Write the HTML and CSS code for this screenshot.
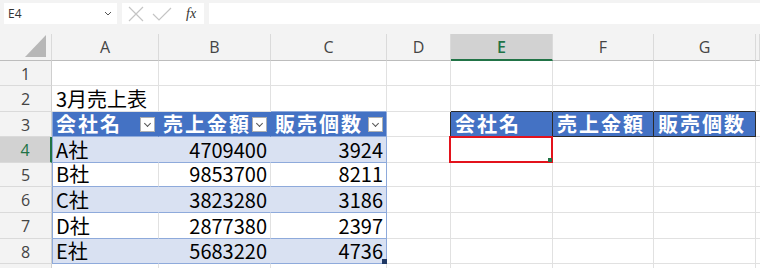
FILE: index.html
```html
<!DOCTYPE html>
<html lang="ja">
<head>
    <meta charset="UTF-8">
    <title>3月売上表</title>
    <link rel="stylesheet" href="styles.css">
</head>
<body>
    <div class="formula-bar">
        <div class="name-box">
            <span>E4</span>
            <svg width="8" height="5" viewBox="0 0 8 5"><polyline points="1,1 4,4 7,1" fill="none" stroke="#555" stroke-width="1"/></svg>
        </div>
        <div class="fx-buttons">
            <svg width="16" height="16" viewBox="0 0 16 16"><path d="M1 1L15 15M15 1L1 15" stroke="#c4c4c4" stroke-width="1.2" fill="none"/></svg>
            <svg width="20" height="16" viewBox="0 0 20 16"><polyline points="1,8 7,14 19,2" stroke="#c4c4c4" stroke-width="1.2" fill="none"/></svg>
            <span class="fx">fx</span>
        </div>
        <div class="formula-input"></div>
    </div>

    <div class="sheet">
        <!-- column headers -->
        <div class="ch corner"><svg width="22" height="23" viewBox="0 0 22 23"><polygon points="21,0 21,22 0,22" fill="#b7b7b7"/></svg></div>
        <div class="ch">A</div>
        <div class="ch">B</div>
        <div class="ch">C</div>
        <div class="ch">D</div>
        <div class="ch sel-col">E</div>
        <div class="ch">F</div>
        <div class="ch">G</div>
        <div class="ch"></div>

        <!-- row 1 -->
        <div class="rh">1</div>
        <div class="c"></div><div class="c"></div><div class="c"></div><div class="c"></div>
        <div class="c"></div><div class="c"></div><div class="c"></div><div class="c"></div>

        <!-- row 2 -->
        <div class="rh">2</div>
        <div class="c">3月売上表</div><div class="c"></div><div class="c t-top"></div><div class="c"></div>
        <div class="c k-top"></div><div class="c k-top"></div><div class="c k-top"></div><div class="c"></div>

        <!-- row 3 -->
        <div class="rh">3</div>
        <div class="c th t-left">会社名<span class="filter"></span></div>
        <div class="c th">売上金額<span class="filter"></span></div>
        <div class="c th t-right">販売個数<span class="filter"></span></div>
        <div class="c k-right"></div>
        <div class="c kh">会社名</div>
        <div class="c kh">売上金額</div>
        <div class="c kh">販売個数</div>
        <div class="c"></div>

        <!-- row 4 -->
        <div class="rh sel-row">4</div>
        <div class="c band t-left">A社</div>
        <div class="c band num">4709400</div>
        <div class="c band num t-right">3924</div>
        <div class="c"></div>
        <div class="c active"><span class="cursor"></span></div>
        <div class="c"></div><div class="c"></div><div class="c"></div>

        <!-- row 5 -->
        <div class="rh">5</div>
        <div class="c row t-left">B社</div>
        <div class="c row num">9853700</div>
        <div class="c row num t-right">8211</div>
        <div class="c"></div><div class="c"></div><div class="c"></div><div class="c"></div><div class="c"></div>

        <!-- row 6 -->
        <div class="rh">6</div>
        <div class="c band t-left">C社</div>
        <div class="c band num">3823280</div>
        <div class="c band num t-right">3186</div>
        <div class="c"></div><div class="c"></div><div class="c"></div><div class="c"></div><div class="c"></div>

        <!-- row 7 -->
        <div class="rh">7</div>
        <div class="c row t-left">D社</div>
        <div class="c row num">2877380</div>
        <div class="c row num t-right">2397</div>
        <div class="c"></div><div class="c"></div><div class="c"></div><div class="c"></div><div class="c"></div>

        <!-- row 8 -->
        <div class="rh">8</div>
        <div class="c band t-left">E社</div>
        <div class="c band num">5683220</div>
        <div class="c band num t-right t-end">4736<span class="resize"></span></div>
        <div class="c"></div><div class="c"></div><div class="c"></div><div class="c"></div><div class="c"></div>

        <!-- row 9 -->
        <div class="rh"></div>
        <div class="c"></div><div class="c"></div><div class="c"></div><div class="c"></div>
        <div class="c"></div><div class="c"></div><div class="c"></div><div class="c"></div>
    </div>
</body>
</html>
```

FILE: styles.css
```css
* {
    margin: 0;
    padding: 0;
    box-sizing: border-box;
}

body {
    width: 760px;
    height: 268px;
    overflow: hidden;
    background: #fff;
    font-family: "Noto Sans CJK JP", sans-serif;
}

/* formula bar */
.formula-bar {
    display: flex;
    gap: 5px;
    height: 34px;
    padding: 3px 0 0 4px;
    background: #f3f3f3;
}

.name-box,
.fx-buttons,
.formula-input {
    height: 21px;
    background: #fff;
}

.name-box {
    width: 113px;
    display: flex;
    align-items: center;
    justify-content: space-between;
    padding: 0 5px 0 4px;
    font-family: "Open Sans", sans-serif;
    font-size: 12px;
    color: #333;
}

.fx-buttons {
    width: 82px;
    display: flex;
    align-items: center;
    gap: 8px;
    padding-left: 6px;
}

.fx {
    margin-left: 6px;
    font-family: "Liberation Serif", serif;
    font-style: italic;
    font-size: 14px;
    color: #333;
}

.formula-input {
    flex: 1;
}

/* sheet grid */
.sheet {
    display: grid;
    grid-template-columns: 52px 107px 112px 116px 64px 102px 101px 102px 4px;
    grid-template-rows: 27px 25px 26px 25px 26px 24px 26px 26px 25px 10px;
}

.ch,
.rh {
    display: flex;
    align-items: center;
    justify-content: center;
    background: #f3f3f3;
    font-family: "Open Sans", sans-serif;
    font-size: 16px;
    color: #444;
}

.ch {
    border-right: 1px solid #dadada;
    border-bottom: 1px solid #bdbdbd;
}

.corner {
    justify-content: flex-end;
    align-items: flex-start;
    padding: 1px 4px 0 0;
}

.rh {
    border-right: 1px solid #cfcfcf;
    border-bottom: 1px solid #dadada;
    padding-top: 1px;
}

.sel-col {
    background: #d2d2d2;
    color: #217346;
    font-weight: 600;
    border-bottom: 2px solid #217346;
}

.sel-row {
    background: #d2d2d2;
    color: #217346;
    border-right: 2px solid #217346;
}

.c {
    position: relative;
    display: flex;
    align-items: flex-end;
    padding: 0 3px 2px 4px;
    border-right: 1px solid #e1e1e1;
    border-bottom: 1px solid #e1e1e1;
    font-size: 20px;
    line-height: 20px;
    color: #000;
    white-space: nowrap;
}

.num {
    justify-content: flex-end;
}

/* 売上テーブル (A3:C8) */
.th {
    justify-content: space-between;
    background: #4472c4;
    color: #fff;
    font-weight: 700;
    letter-spacing: 2px;
    border-right-color: #4472c4;
    border-bottom-color: #8eaadb;
}

.band {
    background: #d9e1f2;
    border-right-color: #d9e1f2;
    border-bottom-color: #8eaadb;
}

.row {
    border-bottom-color: #8eaadb;
}

.t-top {
    border-bottom-color: #8eaadb;
}

.t-left {
    box-shadow: inset 1px 0 0 #8eaadb;
}

.t-right {
    border-right-color: #8eaadb;
}

.filter {
    align-self: center;
    width: 15px;
    height: 15px;
    margin: 3px 0 0;
    background: #fff;
    border: 1px solid #b0b0b0;
    position: relative;
}

.filter::after {
    content: "";
    position: absolute;
    left: 4px;
    top: 3px;
    width: 4px;
    height: 4px;
    border-right: 1px solid #555;
    border-bottom: 1px solid #555;
    transform: rotate(45deg);
}

.resize {
    position: absolute;
    right: -1px;
    bottom: -1px;
    width: 5px;
    height: 5px;
    background: #1f3864;
}

/* 検索用の見出し (E3:G3) */
.kh {
    background: #4472c4;
    color: #fff;
    font-weight: 700;
    letter-spacing: 2px;
    border-right-color: #2b2b2b;
    border-bottom-color: #2b2b2b;
}

.k-top {
    border-bottom-color: #2b2b2b;
}

.k-right {
    border-right-color: #2b2b2b;
}

/* 選択セル */
.active::before {
    content: "";
    position: absolute;
    left: -2px;
    top: -1px;
    right: -1px;
    bottom: -1px;
    border: 2px solid #e3131c;
}

.cursor {
    position: absolute;
    right: 0;
    bottom: 0;
    width: 4px;
    height: 4px;
    background: #217346;
}
```
